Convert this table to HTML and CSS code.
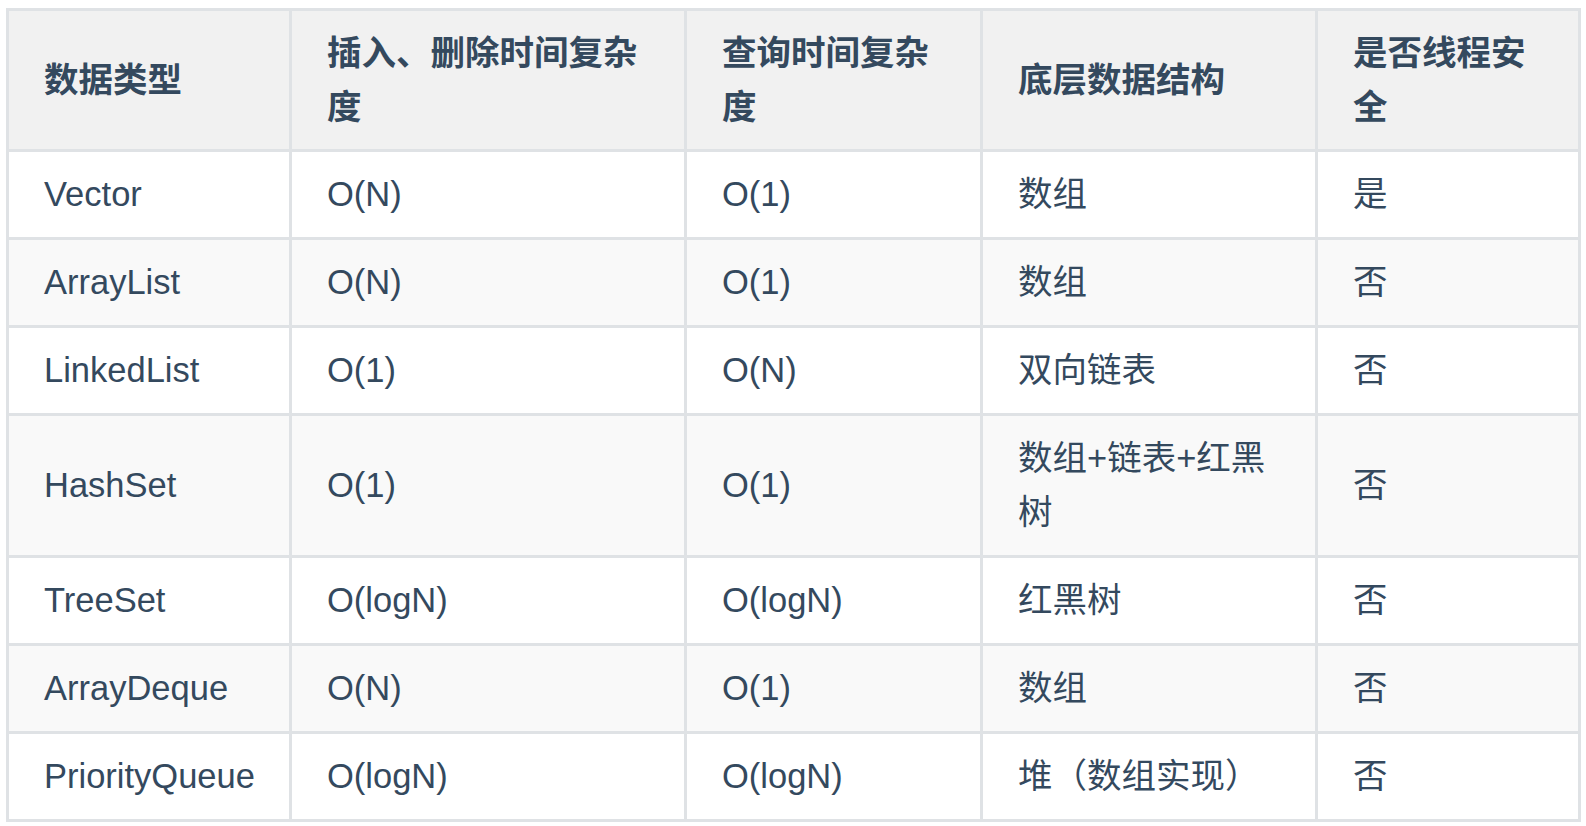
FILE: index.html
```html
<!DOCTYPE html>
<html lang="zh-CN">
<head>
<meta charset="utf-8">
<title>集合对比</title>
<link rel="stylesheet" href="styles.css">
</head>
<body>
<table class="cmp">
  <colgroup>
    <col class="c1"><col class="c2"><col class="c3"><col class="c4"><col class="c5">
  </colgroup>
  <thead>
    <tr>
      <th>数据类型</th>
      <th>插入、删除时间复杂度</th>
      <th>查询时间复杂度</th>
      <th>底层数据结构</th>
      <th>是否线程安全</th>
    </tr>
  </thead>
  <tbody>
    <tr><td>Vector</td><td>O(N)</td><td>O(1)</td><td>数组</td><td>是</td></tr>
    <tr><td>ArrayList</td><td>O(N)</td><td>O(1)</td><td>数组</td><td>否</td></tr>
    <tr><td>LinkedList</td><td>O(1)</td><td>O(N)</td><td>双向链表</td><td>否</td></tr>
    <tr><td>HashSet</td><td>O(1)</td><td>O(1)</td><td>数组+链表+红黑树</td><td>否</td></tr>
    <tr><td>TreeSet</td><td>O(logN)</td><td>O(logN)</td><td>红黑树</td><td>否</td></tr>
    <tr><td>ArrayDeque</td><td>O(N)</td><td>O(1)</td><td>数组</td><td>否</td></tr>
    <tr><td>PriorityQueue</td><td>O(logN)</td><td>O(logN)</td><td>堆（数组实现）</td><td>否</td></tr>
  </tbody>
</table>
</body>
</html>
```
FILE: styles.css
```css
html, body {
  background: #ffffff;
}
body {
  margin: 8px 0 0 6px;
  font-family: "Liberation Sans", "Noto Sans CJK SC", sans-serif;
  color: #34495e;
}
.cmp {
  border-collapse: separate;
  border-spacing: 0;
  table-layout: fixed;
  width: 1575px;
  border-top: 3px solid #dfe2e5;
  border-left: 3px solid #dfe2e5;
  font-size: 34.5px;
  line-height: 54px;
}
.c1 { width: 283px; }
.c2 { width: 395px; }
.c3 { width: 296px; }
.c4 { width: 335px; }
.c5 { width: 263px; }
.cmp th,
.cmp td {
  box-sizing: border-box;
  border-right: 3px solid #dfe2e5;
  border-bottom: 3px solid #dfe2e5;
  text-align: left;
  vertical-align: middle;
  padding: 15px 30px 16px 35px;
}
.cmp th {
  font-weight: bold;
  background: #f1f1f1;
  padding-bottom: 15px;
}
.cmp tbody tr:nth-child(even) td {
  background: #f9f9f9;
}
```
